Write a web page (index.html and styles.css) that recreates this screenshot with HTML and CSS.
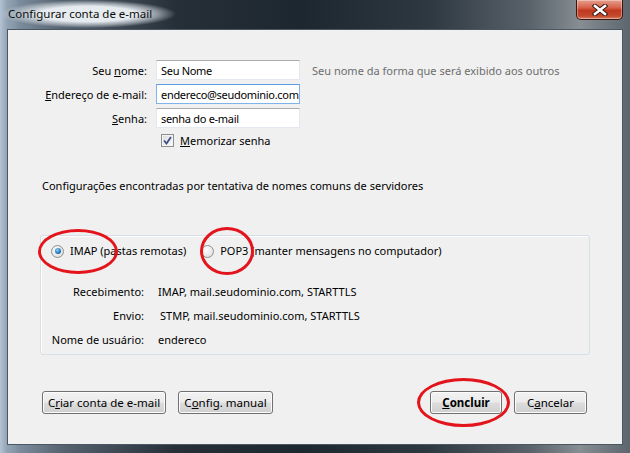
FILE: index.html
```html
<!DOCTYPE html>
<html lang="pt-BR">
<head>
    <meta charset="UTF-8" />
    <title>Configurar conta de e-mail</title>
    <link rel="stylesheet" href="styles.css">
</head>
<body>
    <div class="window">
        <!-- Title bar -->
        <div class="titlebar">
            <span class="title">Configurar conta de e-mail</span>
            <button class="close" type="button">
                <svg width="16" height="12" viewBox="0 0 16 12">
                    <path d="M3 2 L13 10 M13 2 L3 10" stroke="#3b1a14" stroke-width="4.6" stroke-linecap="square" fill="none"/>
                    <path d="M3 2 L13 10 M13 2 L3 10" stroke="#fff" stroke-width="2.6" stroke-linecap="square" fill="none"/>
                </svg>
            </button>
        </div>

        <div class="client">
            <!-- Account fields -->
            <div class="form">
                <label class="lbl">Seu <u>n</u>ome:</label>
                <input class="field" type="text" value="Seu Nome" />
                <span class="hint">Seu nome da forma que será exibido aos outros</span>

                <label class="lbl"><u>E</u>ndereço de e-mail:</label>
                <input class="field focused" type="text" value="endereco@seudominio.com" />
                <span></span>

                <label class="lbl"><u>S</u>enha:</label>
                <input class="field" type="text" value="senha do e-mail" />
                <span></span>

                <span></span>
                <label class="check">
                    <span class="checkbox">
                        <svg width="9" height="9" viewBox="0 0 9 9">
                            <path d="M1 4.5 L3.5 7.5 L8 1" stroke="#3e4f87" stroke-width="1.8" fill="none"/>
                        </svg>
                    </span>
                    <span><u>M</u>emorizar senha</span>
                </label>
            </div>

            <p class="found">Configurações encontradas por tentativa de nomes comuns de servidores</p>

            <!-- Server settings -->
            <div class="group">
                <div class="protocols">
                    <label class="opt"><span class="radio checked"></span>IMAP (pastas remotas)</label>
                    <label class="opt"><span class="radio"></span>POP3 (manter mensagens no computador)</label>
                </div>
                <div class="details">
                    <span class="dl">Recebimento:</span>
                    <span>IMAP, mail.seudominio.com, STARTTLS</span>
                    <span class="dl">Envio:</span>
                    <span class="shift">STMP, mail.seudominio.com, STARTTLS</span>
                    <span class="dl">Nome de usuário:</span>
                    <span>endereco</span>
                </div>
            </div>

            <!-- Dialog buttons -->
            <div class="buttons">
                <div class="btn-group">
                    <button class="btn wide" type="button">C<u>r</u>iar conta de e-mail</button>
                    <button class="btn manual" type="button">C<u>o</u>nfig. manual</button>
                </div>
                <div class="btn-group">
                    <button class="btn default" type="button"><u>C</u>oncluir</button>
                    <button class="btn" type="button">C<u>a</u>ncelar</button>
                </div>
            </div>
        </div>

        <!-- Red marks drawn over the screenshot -->
        <span class="mark mark-imap"></span>
        <span class="mark mark-pop"></span>
        <span class="mark mark-ok"></span>
    </div>
</body>
</html>
```

FILE: styles.css
```css
/* === Reset === */
body, p {
    margin: 0;
    padding: 0;
}

body {
    font-family: "Noto Sans", "Open Sans", sans-serif;
    font-size: 11px;
    color: #000;
    background: #2b343c;
}

/* === Window frame === */
.window {
    position: relative;
    width: 630px;
    height: 453px;
    box-sizing: border-box;
    padding: 0 7px 8px 7px;
    display: flex;
    flex-direction: column;
    overflow: hidden;
    background:
        linear-gradient(90deg, #b3c3d3 0, #90a1b1 1.2%, rgba(0,0,0,0) 3%),
        linear-gradient(90deg, #8c9eb0 0, #55626f 10%, #262f38 28%, #1d2730 48%, #2e3840 68%, #59626a 84%, #868d93 92%, #5d666e 100%);
}

.titlebar {
    height: 29px;
    display: flex;
    justify-content: space-between;
    align-items: flex-start;
}

.title {
    margin: 0 0 0 -7px;
    padding: 6px 24px 7px 8px;
    font-size: 11.5px;
    color: #0b0b0b;
    background: radial-gradient(closest-side, #e6ebef 55%, rgba(200,208,215,0.6) 80%, rgba(200,208,215,0) 100%);
}

.close {
    width: 47px;
    height: 20px;
    padding: 0;
    border: 1px solid #3a1710;
    border-top: none;
    border-radius: 0 0 5px 5px;
    display: flex;
    align-items: center;
    justify-content: center;
    background: linear-gradient(#e6a08e 0, #d7624b 40%, #c0391f 55%, #c44a2e 85%, #dd8266 100%);
    box-shadow: inset 0 0 0 1px rgba(255,255,255,0.35);
}

/* === Client area === */
.client {
    flex: 1;
    background: #f0f0f0;
    border: 1px solid #4b5863;
    display: flex;
    flex-direction: column;
    padding-bottom: 30px;
}

.form {
    margin-top: 30px;
    display: grid;
    grid-template-columns: 139px 144px 1fr;
    grid-template-rows: 20px 20px 20px 16px;
    column-gap: 9px;
    row-gap: 4px;
    align-items: center;
}

.lbl {
    text-align: right;
}

.field {
    height: 20px;
    box-sizing: border-box;
    margin: 0;
    padding: 0 0 0 4px;
    font-family: inherit;
    font-size: 11px;
    letter-spacing: -0.3px;
    color: #000;
    background: #fff;
    border: 1px solid #e3e9ef;
    border-top-color: #abadb3;
}

.field.focused {
    border-color: #7eb4ea;
    border-top-color: #569de5;
}

.hint {
    padding-left: 3px;
    color: #6d6d6d;
}

.check {
    display: flex;
    align-items: center;
    gap: 6px;
    margin-left: 5px;
}

.checkbox {
    width: 11px;
    height: 11px;
    border: 1px solid #8e8f8f;
    display: flex;
    align-items: center;
    justify-content: center;
    background: linear-gradient(135deg, #dcdcdc, #fafafa);
    box-shadow: inset 0 0 0 1px #f4f4f4;
}

.found {
    margin: 30px 0 0 34px;
    line-height: 16px;
}

/* === Group box === */
.group {
    margin: 41px 32px 0 32px;
    height: 120px;
    box-sizing: border-box;
    border: 1px solid #d5dfe5;
    border-radius: 3px;
    box-shadow: inset 1px 1px 0 #fff;
    padding: 7px 0 0 10px;
}

.protocols {
    display: flex;
    gap: 15px;
    line-height: 16px;
}

.opt {
    display: flex;
    align-items: center;
    gap: 6px;
}

.radio {
    width: 11px;
    height: 11px;
    border: 1px solid #8f8f8f;
    border-radius: 50%;
    background: radial-gradient(circle at 40% 35%, #fdfdfd, #d8d8d8);
    position: relative;
}

.radio.checked::after {
    content: "";
    position: absolute;
    left: 2.5px;
    top: 2.5px;
    width: 6px;
    height: 6px;
    border-radius: 50%;
    background: radial-gradient(circle at 40% 35%, #8fd2ff, #1c73b8 60%, #0e4a7d);
}

.details {
    margin: 25px 0 0 -2px;
    display: grid;
    grid-template-columns: 95px auto;
    column-gap: 14px;
    row-gap: 8px;
    line-height: 16px;
}

.dl {
    text-align: right;
}

.shift {
    padding-left: 2px;
}

/* === Buttons === */
.buttons {
    margin-top: auto;
    padding: 0 35px 0 34px;
    display: flex;
    justify-content: space-between;
}

.btn-group {
    display: flex;
    gap: 12px;
}

.btn {
    height: 23px;
    width: 73px;
    padding: 0;
    font-family: inherit;
    font-size: 11.5px;
    color: #000;
    border: 1px solid #707070;
    border-radius: 3px;
    background: linear-gradient(#f2f2f2 0, #ebebeb 48%, #dddddd 52%, #cfcfcf 100%);
    box-shadow: inset 0 0 0 1px #fcfcfc;
}

.btn.wide {
    width: 124px;
}

.btn.manual {
    width: 95px;
}

.btn.default {
    width: 72px;
    font-weight: bold;
}

/* === Annotation marks === */
.mark {
    position: absolute;
    box-sizing: border-box;
    border: 3px solid #e3141c;
    border-radius: 50%;
}

.mark-imap {
    left: 38px;
    top: 229px;
    width: 80px;
    height: 45px;
}

.mark-pop {
    left: 200px;
    top: 227px;
    width: 54px;
    height: 48px;
}

.mark-ok {
    left: 417px;
    top: 378px;
    width: 93px;
    height: 49px;
}
```
